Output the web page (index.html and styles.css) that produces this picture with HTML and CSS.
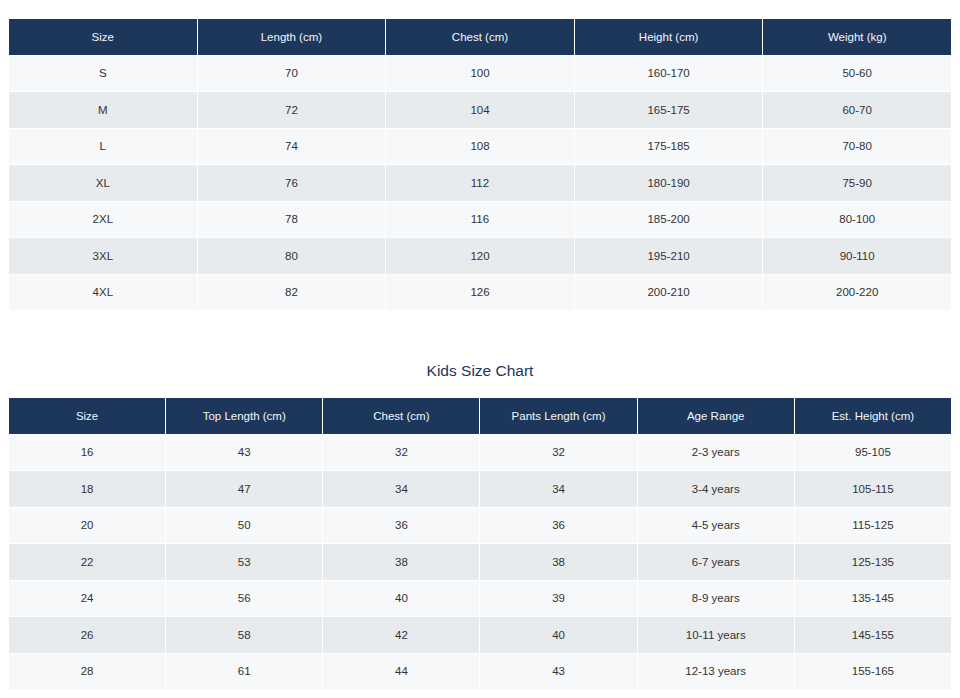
FILE: index.html
```html
<!DOCTYPE html>
<html lang="en">
<head>
<meta charset="utf-8">
<title>Size Chart</title>
<link rel="stylesheet" href="styles.css">
</head>
<body>
<div class="page">
  <table class="chart">
    <thead>
      <tr><th>Size</th><th>Length (cm)</th><th>Chest (cm)</th><th>Height (cm)</th><th>Weight (kg)</th></tr>
    </thead>
    <tbody>
      <tr><td>S</td><td>70</td><td>100</td><td>160-170</td><td>50-60</td></tr>
      <tr><td>M</td><td>72</td><td>104</td><td>165-175</td><td>60-70</td></tr>
      <tr><td>L</td><td>74</td><td>108</td><td>175-185</td><td>70-80</td></tr>
      <tr><td>XL</td><td>76</td><td>112</td><td>180-190</td><td>75-90</td></tr>
      <tr><td>2XL</td><td>78</td><td>116</td><td>185-200</td><td>80-100</td></tr>
      <tr><td>3XL</td><td>80</td><td>120</td><td>195-210</td><td>90-110</td></tr>
      <tr><td>4XL</td><td>82</td><td>126</td><td>200-210</td><td>200-220</td></tr>
    </tbody>
  </table>

  <h2 class="chart-title">Kids Size Chart</h2>

  <table class="chart">
    <thead>
      <tr><th>Size</th><th>Top Length (cm)</th><th>Chest (cm)</th><th>Pants Length (cm)</th><th>Age Range</th><th>Est. Height (cm)</th></tr>
    </thead>
    <tbody>
      <tr><td>16</td><td>43</td><td>32</td><td>32</td><td>2-3 years</td><td>95-105</td></tr>
      <tr><td>18</td><td>47</td><td>34</td><td>34</td><td>3-4 years</td><td>105-115</td></tr>
      <tr><td>20</td><td>50</td><td>36</td><td>36</td><td>4-5 years</td><td>115-125</td></tr>
      <tr><td>22</td><td>53</td><td>38</td><td>38</td><td>6-7 years</td><td>125-135</td></tr>
      <tr><td>24</td><td>56</td><td>40</td><td>39</td><td>8-9 years</td><td>135-145</td></tr>
      <tr><td>26</td><td>58</td><td>42</td><td>40</td><td>10-11 years</td><td>145-155</td></tr>
      <tr><td>28</td><td>61</td><td>44</td><td>43</td><td>12-13 years</td><td>155-165</td></tr>
    </tbody>
  </table>
</div>
</body>
</html>
```

FILE: styles.css
```css
html, body {
  margin: 0;
  padding: 0;
  background: #ffffff;
}

body {
  padding: 8px;
  font-family: "Liberation Sans", Arial, sans-serif;
  color: #333333;
}

.page {
  padding-top: 10px;
}

.chart {
  width: 100%;
  border-collapse: collapse;
  table-layout: fixed;
}

.chart th,
.chart td {
  border: 1px solid #ffffff;
  text-align: center;
  vertical-align: middle;
  padding: 0 6px;
  height: 35.5px;
  font-size: 11.5px;
  font-weight: normal;
}

.chart th {
  background: #1c365c;
  color: #f4f6f9;
}

.chart tbody tr:nth-child(odd) td {
  background: #f7f8fa;
}

.chart tbody tr:nth-child(even) td {
  background: #e8ebee;
}

.chart-title {
  margin: 50px 0 16px;
  font-size: 15.5px;
  line-height: 20px;
  font-weight: normal;
  text-align: center;
  color: #1c365c;
}
```
